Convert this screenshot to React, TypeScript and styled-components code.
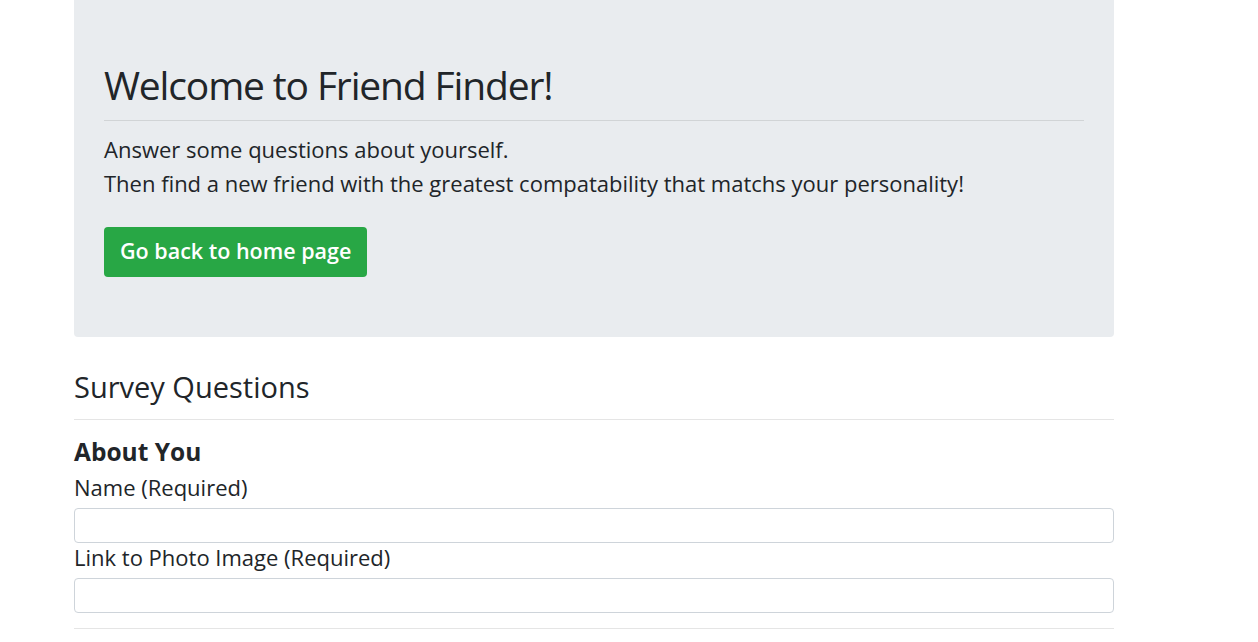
import React from "react";
import styled, { createGlobalStyle } from "styled-components";

const Global = createGlobalStyle`
  html, body { margin: 0; padding: 0; background: #fff; }
  body { font-family: "Open Sans", "Noto Sans", sans-serif; color: #212529; }
  * { box-sizing: border-box; }
`;

const Page = styled.div`
  padding-left: 74px;
  width: 1114px;
`;

const Jumbotron = styled.section`
  display: flex;
  flex-direction: column;
  align-items: flex-start;
  background: #e9ecef;
  border-radius: 0 0 4px 4px;
  padding: 61px 30px 60px;
`;

const Title = styled.h1`
  margin: 0;
  font-size: 39px;
  font-weight: 500;
  line-height: 48px;
  letter-spacing: -1.15px;
`;

const Rule = styled.hr<{ $top: number }>`
  align-self: stretch;
  margin: ${(p) => p.$top}px 0 0;
  border: 0;
  border-top: 1px solid rgba(0, 0, 0, 0.1);
`;

const Lead = styled.p`
  margin: 11px 0 0;
  font-size: 22px;
  line-height: 34px;
`;

const Button = styled.a`
  margin-top: 27px;
  display: inline-flex;
  align-items: center;
  height: 50px;
  padding: 0 16px 4px;
  background: #28a745;
  color: #fff;
  border-radius: 4px;
  font-size: 21.5px;
  font-weight: 600;
  text-decoration: none;
`;

const Survey = styled.section`
  display: flex;
  flex-direction: column;
  align-items: flex-start;
`;

const SectionTitle = styled.h2`
  margin: 32px 0 0;
  font-size: 29px;
  font-weight: 500;
  line-height: 36px;
`;

const Subhead = styled.h4`
  margin: 17px 0 0;
  font-size: 24.5px;
  font-weight: 700;
  line-height: 30px;
`;

const Label = styled.label<{ $top: number }>`
  margin-top: ${(p) => p.$top}px;
  font-size: 22px;
  line-height: 28px;
`;

const Input = styled.input<{ $top: number }>`
  align-self: stretch;
  margin-top: ${(p) => p.$top}px;
  height: 35px;
  border: 1px solid #ced4da;
  border-radius: 4px;
  background: #fff;
  font: inherit;
`;

export default function App() {
  return (
    <>
      <Global />
      <Page>
        <Jumbotron>
          <Title>Welcome to Friend Finder!</Title>
          <Rule $top={11} />
          <Lead>
            Answer some questions about yourself.
            <br />
            Then find a new friend with the greatest compatability that matchs your personality!
          </Lead>
          <Button href="#">Go back to home page</Button>
        </Jumbotron>
        <Survey>
          <SectionTitle>Survey Questions</SectionTitle>
          <Rule $top={14} />
          <Subhead>About You</Subhead>
          <Label $top={6}>Name (Required)</Label>
          <Input $top={7} />
          <Label $top={0}>Link to Photo Image (Required)</Label>
          <Input $top={7} />
          <Rule $top={15} />
        </Survey>
      </Page>
    </>
  );
}
